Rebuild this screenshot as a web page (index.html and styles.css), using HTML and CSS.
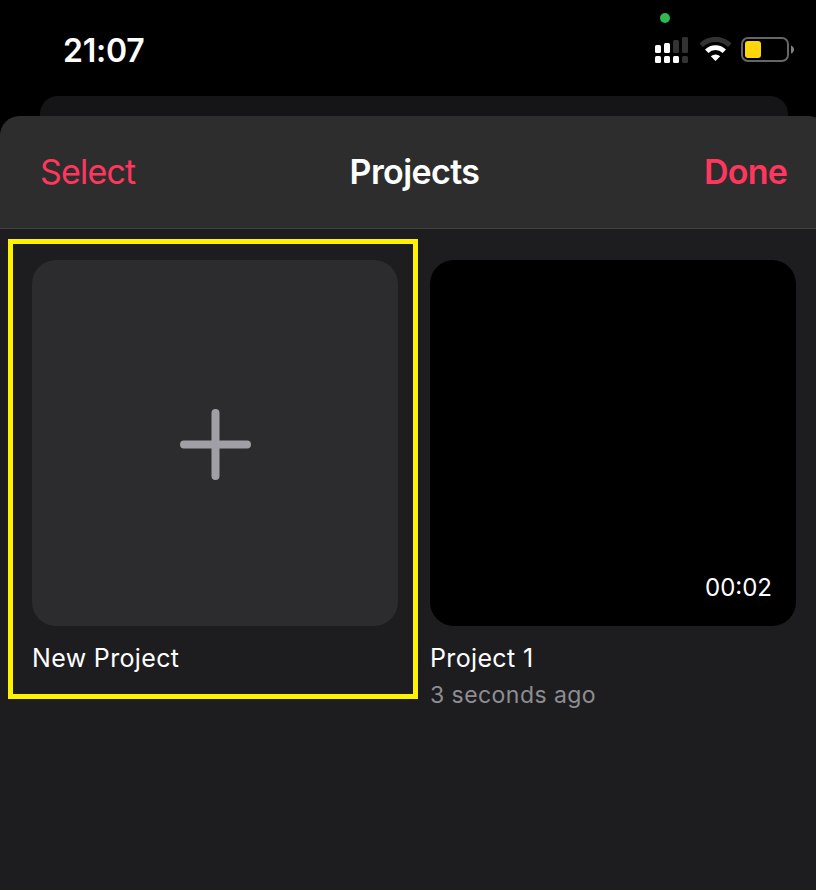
FILE: index.html
```html
<!DOCTYPE html>
<html lang="en">
<head>
    <meta charset="UTF-8">
    <meta name="viewport" content="width=device-width, initial-scale=1.0">
    <title>Projects</title>
    <link rel="stylesheet" href="styles.css">
</head>
<body>

    <div class="screen">
        <div class="status-bar">
            <div class="time">21:07</div>
            <div class="camera-dot"></div>
            <div class="status-icons">
                <svg class="signal" width="33" height="26" viewBox="0 0 33 26" fill="#fff">
                    <rect x="0" y="8" width="6" height="8" rx="1.5"/>
                    <rect x="9" y="6" width="6" height="10" rx="1.5"/>
                    <rect x="18" y="3" width="6" height="13" rx="1.5" fill="#333"/>
                    <rect x="27" y="0" width="6" height="16" rx="1.5" fill="#333"/>
                    <rect x="0" y="19" width="6" height="7" rx="1.5"/>
                    <rect x="9" y="19" width="6" height="7" rx="1.5"/>
                    <rect x="18" y="19" width="6" height="7" rx="1.5"/>
                    <rect x="27" y="19" width="6" height="7" rx="1.5" fill="#333"/>
                </svg>
                <svg class="wifi" width="32" height="24" viewBox="0 0 32 24" fill="none">
                    <path d="M1.2 8.2 A20.5 20.5 0 0 1 29.8 8.2" stroke="#333" stroke-width="5"/>
                    <path d="M6.7 14.2 A12.6 12.6 0 0 1 24.3 14.2" stroke="#fff" stroke-width="4.8"/>
                    <path d="M10.8 19.2 A7 7 0 0 1 20.2 19.2 L16.1 23.4 Q15.5 24 14.9 23.4 Z" fill="#fff"/>
                </svg>
                <svg class="battery" width="53" height="25" viewBox="0 0 53 25">
                    <rect x="1" y="1" width="46" height="23" rx="6" fill="none" stroke="#666" stroke-width="2"/>
                    <rect x="4" y="4" width="16" height="17" rx="3" fill="#ffd60a"/>
                    <path d="M50 8.4 Q53 9.6 53 12.5 Q53 15.4 50 16.6 Z" fill="#808080"/>
                </svg>
            </div>
        </div>

        <div class="back-sheet"></div>

        <div class="sheet">
            <div class="header">
                <button class="select-btn">Select</button>
                <h1>Projects</h1>
                <button class="done-btn">Done</button>
            </div>

            <div class="projects">
                <div class="project">
                    <div class="thumb new-thumb">
                        <svg width="72" height="72" viewBox="0 0 72 72" stroke="#a09fa6" stroke-width="8" stroke-linecap="round">
                            <path d="M36.5 5 V68 M5 36.5 H68"/>
                        </svg>
                    </div>
                    <div class="name">New Project</div>
                    <div class="highlight"></div>
                </div>
                <div class="project">
                    <div class="thumb video-thumb">
                        <span class="duration">00:02</span>
                    </div>
                    <div class="name">Project 1</div>
                    <div class="date">3 seconds ago</div>
                </div>
            </div>
        </div>
    </div>

</body>
</html>
```
FILE: styles.css
```css
body {
    margin: 0;
    background-color: #000;
    font-family: Inter, "Liberation Sans", sans-serif;
    color: #fff;
    overflow: hidden;
}
/* the phone screen is a little wider than the window */
.screen {
    width: 828px;
    height: 890px;
    display: flex;
    flex-direction: column;
}
.status-bar {
    position: relative;
    box-sizing: border-box;
    height: 96px;
    padding: 30px 34px 0 63px;
    display: flex;
    justify-content: space-between;
    align-items: flex-start;
}
.time {
    padding-top: 1px;
    font-size: 32px;
    line-height: 40px;
    font-weight: 600;
    letter-spacing: -0.25px;
}
.camera-dot {
    position: absolute;
    left: 660px;
    top: 13px;
    width: 10px;
    height: 10px;
    border-radius: 50%;
    background-color: #2fb950;
}
.status-icons {
    display: flex;
    align-items: flex-start;
    padding-top: 7px;
}
.wifi {
    margin: 0 9px 0 12px;
}
.back-sheet {
    height: 20px;
    margin: 0 40px;
    border-radius: 18px 18px 0 0;
    background-color: #151517;
}
.sheet {
    flex: 1;
    background-color: #1d1d1f;
    border-radius: 20px 20px 0 0;
    overflow: hidden;
}
.header {
    box-sizing: border-box;
    height: 113px;
    padding: 0 40px;
    display: grid;
    grid-template-columns: 1fr auto 1fr;
    align-items: center;
    background-color: #2d2d2d;
    border-bottom: 1px solid #414142;
}
.header h1 {
    margin: 0;
    padding-left: 1px;
    font-size: 34px;
    line-height: 40px;
    font-weight: 600;
    letter-spacing: -0.6px;
}
.header button {
    padding: 0;
    border: none;
    background: none;
    color: #ff375f;
    font-family: inherit;
    font-size: 34px;
    line-height: 40px;
    letter-spacing: -0.8px;
    cursor: pointer;
}
.header .select-btn {
    justify-self: start;
}
.header .done-btn {
    justify-self: end;
    padding-right: 1px;
    font-weight: 600;
}
.projects {
    display: grid;
    grid-template-columns: 366px 366px;
    gap: 32px;
    padding: 31px 32px;
}
.project {
    position: relative;
}
.thumb {
    box-sizing: border-box;
    height: 366px;
    border-radius: 24px;
    display: flex;
}
.new-thumb {
    background-color: #2c2c2e;
    align-items: center;
    justify-content: center;
    padding-top: 2px;
}
.video-thumb {
    background-color: #000;
    align-items: flex-end;
    justify-content: flex-end;
    padding: 22px 24px;
}
.duration {
    font-size: 24px;
    line-height: 32px;
}
.name {
    margin-top: 16px;
    font-size: 25px;
    line-height: 32px;
    letter-spacing: 0.35px;
}
.date {
    margin-top: 5px;
    font-size: 23px;
    line-height: 32px;
    letter-spacing: 0.45px;
    color: #8e8d93;
}
/* yellow marker frame around the first tile */
.highlight {
    position: absolute;
    left: -24px;
    top: -21px;
    box-sizing: border-box;
    width: 410px;
    height: 460px;
    border: 5px solid #fff200;
}
```
